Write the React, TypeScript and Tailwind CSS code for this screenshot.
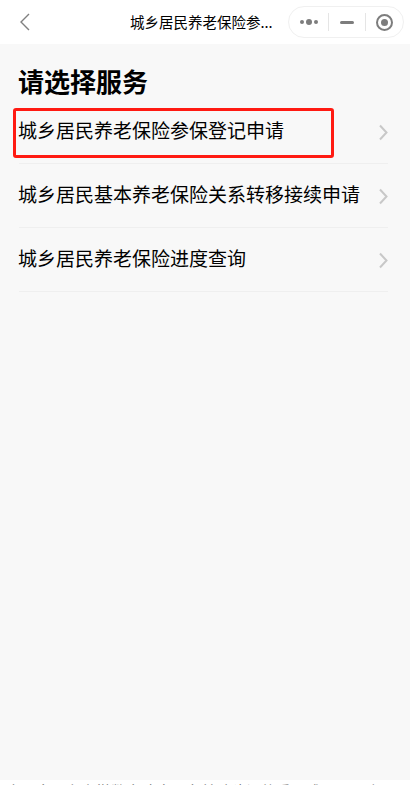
const services = [
  "城乡居民养老保险参保登记申请",
  "城乡居民基本养老保险关系转移接续申请",
  "城乡居民养老保险进度查询",
];

function Capsule() {
  return (
    <div className="flex h-[32px] w-[116px] items-center rounded-full border border-[#f0f0f0] bg-white">
      <div className="flex w-[39px] items-center justify-center gap-[2px]">
        <span className="size-[4px] rounded-full bg-[#7d7d7d]" />
        <span className="size-[6px] rounded-full bg-[#7d7d7d]" />
        <span className="size-[4px] rounded-full bg-[#7d7d7d]" />
      </div>
      <div className="h-[18px] w-px bg-[#e5e5e5]" />
      <div className="flex w-[36px] items-center justify-center">
        <span className="h-[3px] w-[14px] rounded-full bg-[#7d7d7d]" />
      </div>
      <div className="h-[18px] w-px bg-[#e5e5e5]" />
      <div className="flex flex-1 items-center justify-center">
        <span className="flex size-[17px] items-center justify-center rounded-full border-2 border-[#7d7d7d]">
          <span className="size-[7px] rounded-full bg-[#7d7d7d]" />
        </span>
      </div>
    </div>
  );
}

export default function App() {
  return (
    <div className="relative flex h-[785px] w-[410px] flex-col overflow-hidden bg-[#f8f8f8] font-['Noto_Sans_CJK_SC','Noto_Sans',sans-serif] text-black">
      <header className="flex h-[44px] shrink-0 items-center bg-white pr-[6px]">
        <svg className="ml-[19px] h-[18px] w-[11px] text-[#808080]" viewBox="0 0 11 18" fill="none">
          <path d="M10 1L2 9l8 8" stroke="currentColor" strokeWidth="1.4" />
        </svg>
        <div className="ml-[100px] text-[14.5px] leading-[20px] whitespace-nowrap">城乡居民养老保险参...</div>
        <div className="ml-auto">
          <Capsule />
        </div>
      </header>

      <main className="flex-1 pr-[22px] pl-[19px]">
        <h1 className="mt-[18px] ml-[-1px] text-[26px] leading-[38px] font-bold">请选择服务</h1>
        <ul>
          {services.map((name) => (
            <li
              key={name}
              className="flex h-[64px] items-center justify-between border-b border-[#efefef]"
            >
              <span className="mt-[-3px] ml-[-1px] text-[19px] leading-[28px]">{name}</span>
              <svg className="mt-[2px] h-[17px] w-[9px] text-[#c8c8c8]" viewBox="0 0 9 17" fill="none">
                <path d="M1 1.5l6.5 7-6.5 7" stroke="currentColor" strokeWidth="2" />
              </svg>
            </li>
          ))}
        </ul>
      </main>

      <div className="absolute top-[108px] left-[13px] h-[50px] w-[321px] rounded-[3px] border-[3px] border-[#ff1a12]" />

      <footer className="h-[5px] shrink-0 overflow-hidden bg-white pl-[6px] text-[15px] leading-[22px] whitespace-nowrap text-[#777]">
        本，文是在安徽数字政府平台基础建设的重要成果，用户可通过微信端
      </footer>
    </div>
  );
}
